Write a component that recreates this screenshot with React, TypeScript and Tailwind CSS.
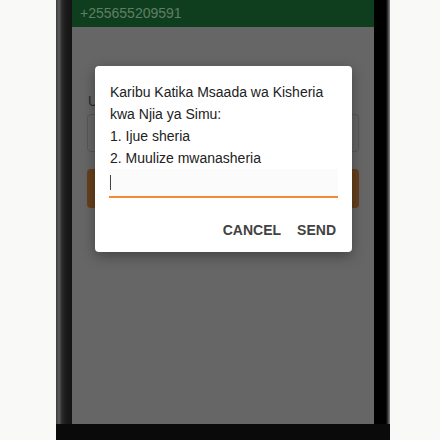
import React from 'react';

const font = { fontFamily: '"Liberation Sans", Arial, sans-serif' };

export default function App() {
  return (
    <div className="w-[440px] h-[440px] bg-[#f9f9f7] flex overflow-hidden" style={font}>
      <div className="ml-[56px] w-[334px] h-[440px] flex flex-col bg-[#0b0b0b]">
        <div className="flex h-[424px]">
          <div className="w-[16px] bg-[linear-gradient(to_right,#3a3a3a_0px,#5c5c5c_3px,#2a2a2a_6px,#1a1a1a_10px,#141414_16px)]" />
          <div className="relative w-[302px] flex flex-col bg-[#666666]">
            <div className="h-[27px] bg-[#0f3e1f] flex items-center pl-2 text-[14px] text-[#5f7f63]">
              +255655209591
            </div>
            <div className="flex flex-col px-[15px] pt-[66px]">
              <div className="text-[14px] leading-[16px] text-[#262626] pl-px">U</div>
              <div className="mt-[5px] h-[38px] rounded border border-[#575757]" />
              <div className="mt-[17px] h-[39px] rounded bg-[#66401d]" />
            </div>

            <div className="absolute left-[23px] top-[66px] w-[257px] h-[186px] bg-white rounded-sm shadow-[0_4px_14px_rgba(0,0,0,0.35)] flex flex-col">
              <div className="pt-[15px] px-[15px] text-[14px] leading-[22px] text-[#222222]">
                <p>Karibu Katika Msaada wa Kisheria</p>
                <p>kwa Njia ya Simu:</p>
                <p>1. Ijue sheria</p>
                <p>2. Muulize mwanasheria</p>
              </div>
              <div className="mx-[14px] h-[29px] bg-[#fbfbfb] border-b-2 border-[#f58a33] flex items-center pl-[1px]">
                <span className="w-px h-[15px] bg-[#444444]" />
              </div>
              <div className="flex justify-end items-center gap-4 pr-[16px] mt-[14px] text-[14px] font-bold text-[#424242] h-[36px]">
                <span>CANCEL</span>
                <span>SEND</span>
              </div>
            </div>
          </div>
          <div className="w-[16px] bg-[linear-gradient(to_right,#000000_0px,#000000_12px,#3c3c3c_14px,#8a8a8a_16px)]" />
        </div>
        <div className="flex-1 bg-[#0a0a0a]" />
      </div>
    </div>
  );
}
